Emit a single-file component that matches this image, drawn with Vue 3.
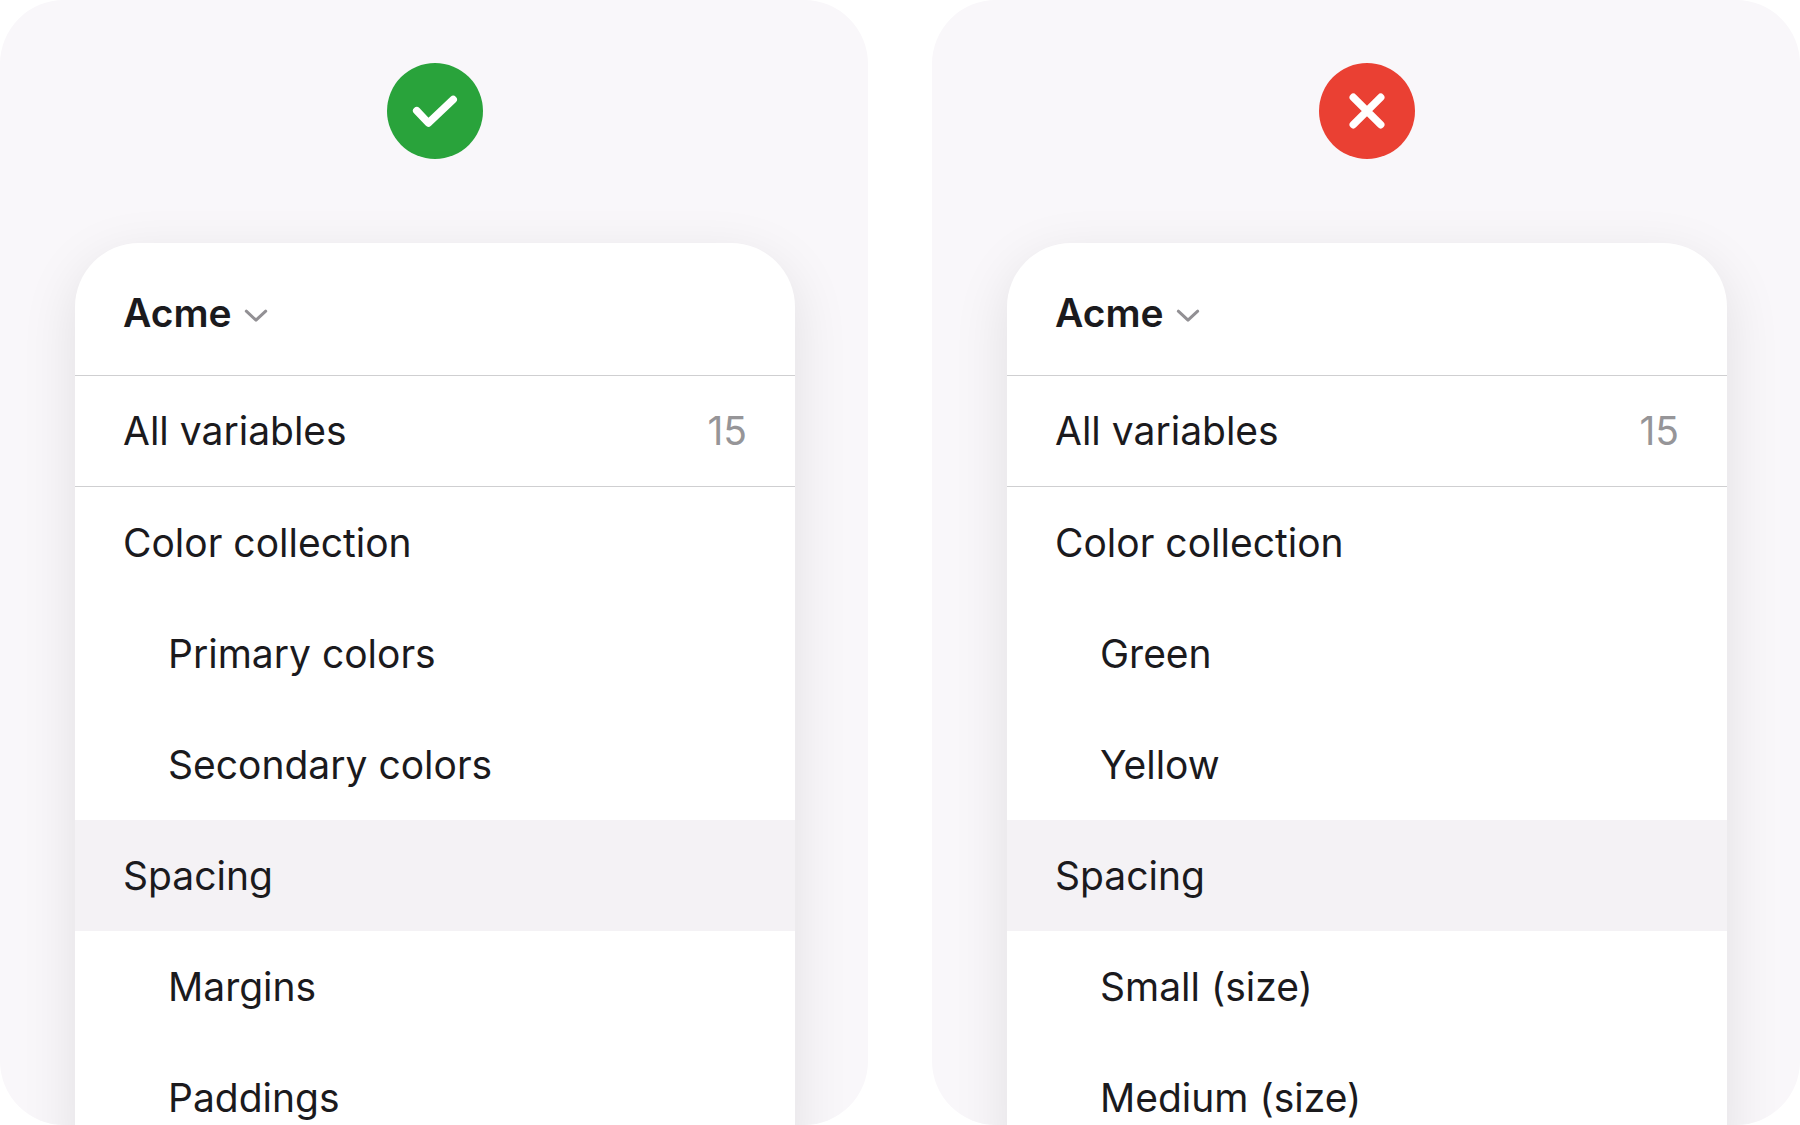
<script setup>
import { ref } from 'vue'

const panels = ref([
  {
    id: 'do',
    status: 'good',
    active: 'Spacing',
    items: [
      { label: 'Color collection' },
      { label: 'Primary colors', nested: true },
      { label: 'Secondary colors', nested: true },
      { label: 'Spacing' },
      { label: 'Margins', nested: true },
      { label: 'Paddings', nested: true }
    ]
  },
  {
    id: 'dont',
    status: 'bad',
    active: 'Spacing',
    items: [
      { label: 'Color collection' },
      { label: 'Green', nested: true },
      { label: 'Yellow', nested: true },
      { label: 'Spacing' },
      { label: 'Small (size)', nested: true },
      { label: 'Medium (size)', nested: true }
    ]
  }
])

function select(panel, label) {
  panel.active = label
}
</script>

<template>
  <main class="compare">
    <section v-for="panel in panels" :key="panel.id" class="panel">
      <svg class="badge" viewBox="0 0 96 96" fill="none" aria-hidden="true">
        <circle cx="48" cy="48" r="48" :class="['badge__disc', `badge__disc--${panel.status}`]" />
        <path v-if="panel.status === 'good'" class="badge__mark" d="M29.7 47.7L41.4 60L66.2 36.6" />
        <path v-else class="badge__mark" d="M34.3 34.3L61.7 61.7M61.7 34.3L34.3 61.7" />
      </svg>

      <div class="sidebar">
        <button type="button" class="sidebar__header">
          Acme
          <svg class="chevron" viewBox="0 0 24 14" fill="none" aria-hidden="true">
            <path d="M2.3 2.2L12 11.2L21.7 2.2" />
          </svg>
        </button>

        <button type="button" class="row row--all" @click="select(panel, 'all')">
          <span>All variables</span>
          <span class="row__count">15</span>
        </button>

        <ul class="sidebar__list">
          <li v-for="item in panel.items" :key="item.label">
            <button
              type="button"
              :class="['row', { 'row--nested': item.nested, 'row--active': panel.active === item.label }]"
              @click="select(panel, item.label)"
            >
              {{ item.label }}
            </button>
          </li>
        </ul>
      </div>
    </section>
  </main>
</template>

<style>
body {
  margin: 0;
  background: #ffffff;
}
</style>

<style scoped>
.compare {
  display: grid;
  grid-template-columns: repeat(2, minmax(0, 1fr));
  gap: 64px;
  height: 100vh;
  font-family: Inter, 'Liberation Sans', sans-serif;
  color: #1b1a1d;
}

.panel {
  display: flex;
  flex-direction: column;
  align-items: center;
  box-sizing: border-box;
  padding: 63px 73px 0 75px;
  border-radius: 64px;
  background: #f9f7fa;
  overflow: hidden;
}

.badge {
  flex: none;
  width: 96px;
  height: 96px;
  margin-bottom: 84px;
}

.badge__disc--good {
  fill: #29a33b;
}

.badge__disc--bad {
  fill: #ea4033;
}

.badge__mark {
  stroke: #ffffff;
  stroke-width: 7.5;
  stroke-linecap: round;
  stroke-linejoin: round;
}

.sidebar {
  flex: none;
  width: 100%;
  border-radius: 64px 64px 0 0;
  background: #ffffff;
  box-shadow: 0 16px 56px rgba(16, 16, 16, 0.1);
  overflow: hidden;
}

.sidebar__header,
.row {
  display: flex;
  align-items: center;
  box-sizing: border-box;
  width: 100%;
  height: 111px;
  margin: 0;
  padding: 0 48px;
  border: 0;
  background: transparent;
  font: inherit;
  font-size: 39px;
  line-height: 48px;
  text-align: left;
  color: inherit;
  cursor: pointer;
}

.sidebar__header {
  gap: 12px;
  height: 133px;
  padding-top: 8px;
  border-bottom: 1px solid #cfcfd1;
  font-weight: 600;
}

.chevron {
  width: 24px;
  height: 14px;
  margin-top: 6px;
}

.chevron path {
  stroke: #929094;
  stroke-width: 3;
  stroke-linecap: round;
  stroke-linejoin: round;
}

.row--all {
  justify-content: space-between;
  border-bottom: 1px solid #cfcfd1;
}

.row__count {
  color: #969598;
}

.sidebar__list {
  margin: 0;
  padding: 0;
  list-style: none;
}

.row--nested {
  padding-left: 93px;
}

.row--active {
  background: #f4f2f5;
}
</style>
